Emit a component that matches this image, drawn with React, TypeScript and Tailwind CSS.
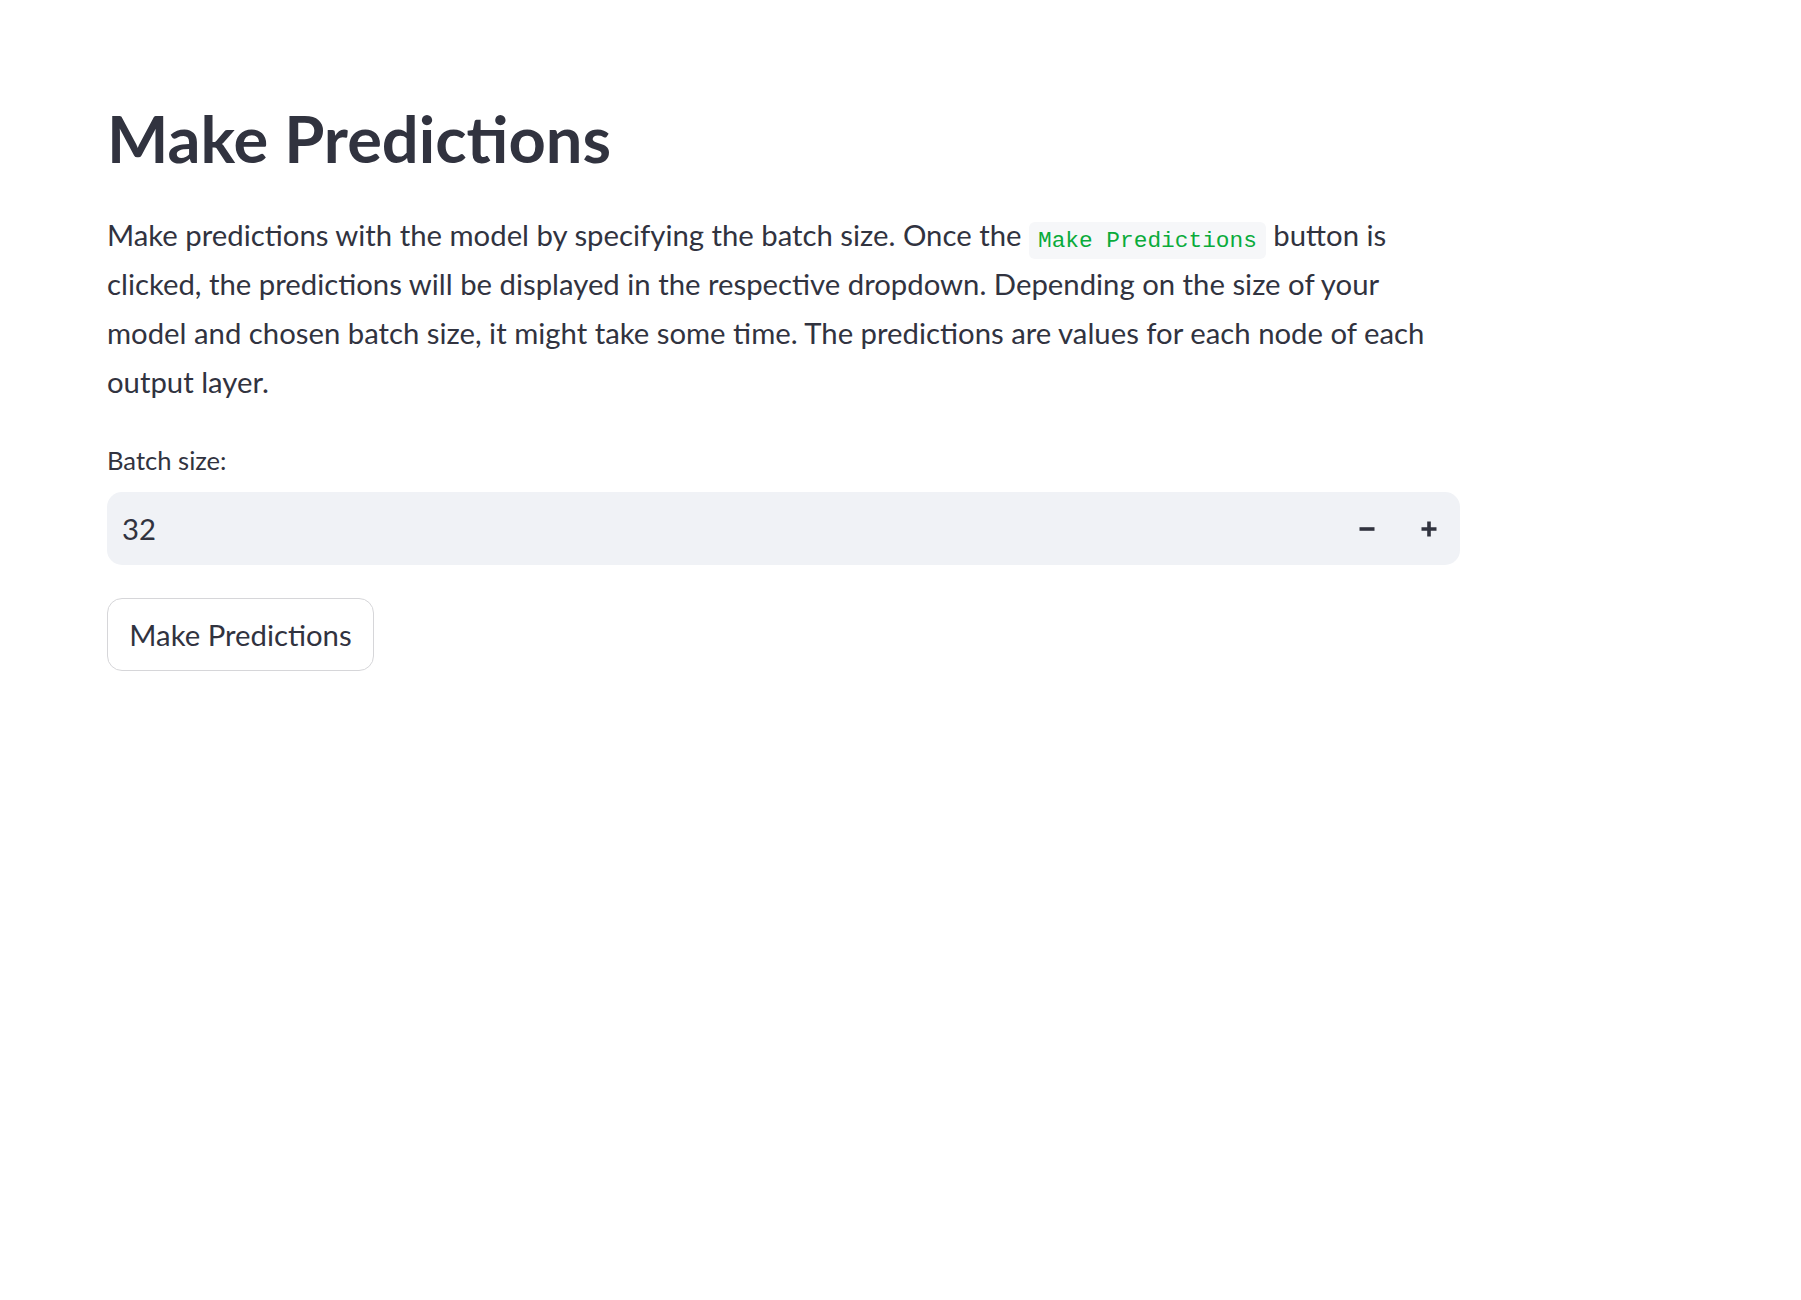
import React, { useState } from 'react';

const textFont = { fontFamily: 'Lato, "Noto Sans", sans-serif' };

const MinusIcon = () => (
  <svg width="16" height="16" viewBox="0 0 16 16" fill="none">
    <path d="M0.5 8h15" stroke="#31333f" strokeWidth="3.6" />
  </svg>
);

const PlusIcon = () => (
  <svg width="16" height="16" viewBox="0 0 16 16" fill="none">
    <path d="M0.5 8h15M8 0.5v15" stroke="#31333f" strokeWidth="3.6" />
  </svg>
);

export default function App() {
  const [batchSize, setBatchSize] = useState(32);

  return (
    <div className="min-h-screen w-full bg-white text-[#31333f]" style={textFont}>
      <div className="w-[1353px] ml-[107px] pt-[100px]">
        {/* Title */}
        <h1 className="text-[65px] leading-[76px] font-bold">
          Make Predictions
        </h1>

        {/* Description */}
        <p className="mt-[34px] text-[29.3px] leading-[49px]">
          Make predictions with the model by specifying the batch size. Once the{' '}
          <code
            className="rounded-[6px] bg-[#f6f7f9] px-[9px] py-[5.5px] text-[22.8px] leading-[24px] text-[#09ab3b]"
            style={{ fontFamily: '"Liberation Mono", "DejaVu Sans Mono", monospace' }}
          >
            Make Predictions
          </code>{' '}
          button is
          <br />
          clicked, the predictions will be displayed in the respective dropdown. Depending on the size of your
          <br />
          model and chosen batch size, it might take some time. The predictions are values for each node of each
          <br />
          output layer.
        </p>

        {/* Batch size input */}
        <label className="mt-[36px] block text-[25.6px] leading-[36px]">Batch size:</label>
        <div className="mt-[14px] flex h-[73px] items-center rounded-[15px] bg-[#f0f2f6]">
          <span className="flex-1 pl-[15px] text-[29.3px]">{batchSize}</span>
          <button
            className="flex h-full w-[62px] items-center justify-center"
            onClick={() => setBatchSize((v) => Math.max(1, v - 1))}
          >
            <MinusIcon />
          </button>
          <button
            className="flex h-full w-[62px] items-center justify-center"
            onClick={() => setBatchSize((v) => v + 1)}
          >
            <PlusIcon />
          </button>
        </div>

        {/* Action button */}
        <button className="mt-[33px] h-[73px] w-[267px] rounded-[15px] border border-[#d6d6d9] bg-white text-[29.3px] text-[#31333f]">
          Make Predictions
        </button>
      </div>
    </div>
  );
}
